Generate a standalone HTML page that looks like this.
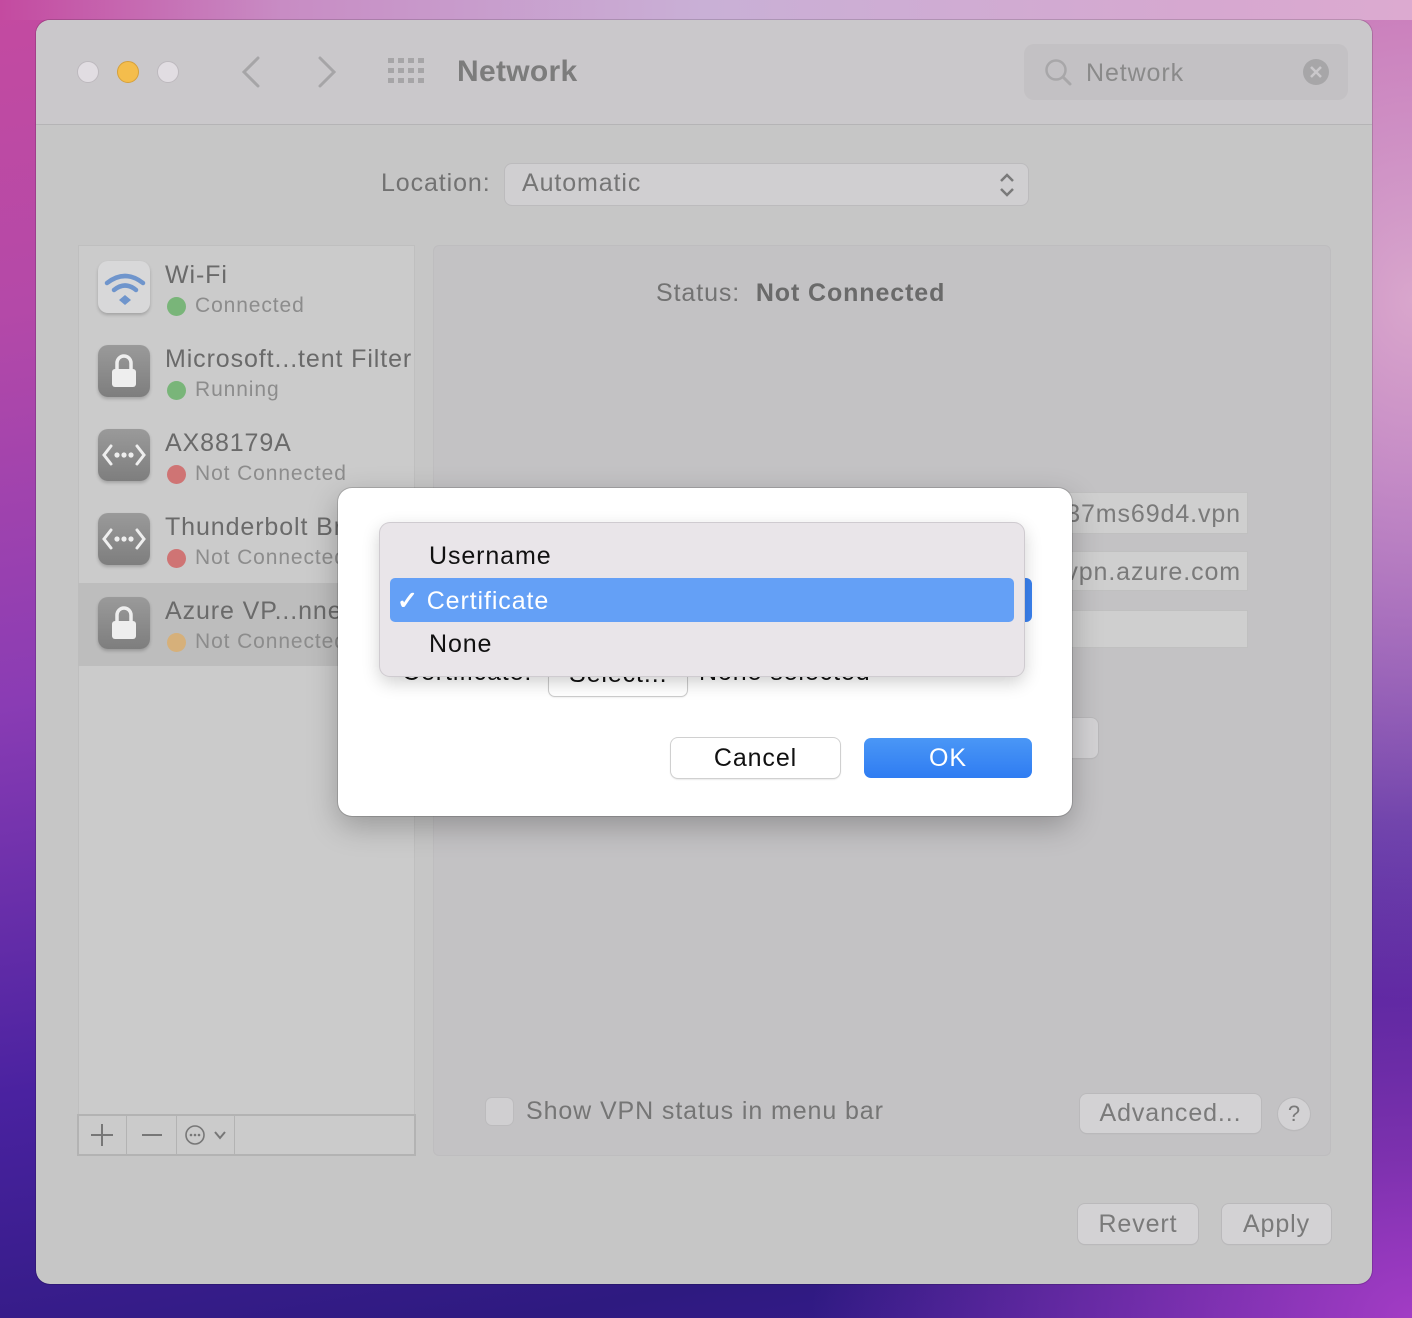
<!DOCTYPE html>
<html><head><meta charset="utf-8"><style>
*{margin:0;padding:0;box-sizing:border-box}
body{width:1412px;height:1318px;overflow:hidden;position:relative;font-family:"Liberation Sans",sans-serif;letter-spacing:0.9px;
background:
radial-gradient(ellipse 500px 700px at 1412px 300px,#d9a6cc 0%,rgba(217,166,204,0) 100%),
radial-gradient(ellipse 600px 500px at 1412px 1318px,#a23cc4 0%,rgba(162,60,196,0) 100%),
linear-gradient(170deg,#c44aa0 0%,#b449a8 20%,#8a3cb4 45%,#4a22a0 70%,#2e1a80 90%,#3a1c90 100%);}
.bgt{position:absolute;left:0;top:0;width:1412px;height:20px;background:linear-gradient(90deg,#c44aa0 0%,#c88cc4 20%,#c9b0d6 50%,#d6a8d0 85%,#dcaad0 100%)}
.win{position:absolute;left:36px;top:20px;width:1336px;height:1264px;border-radius:14px;background:#c6c6c6;overflow:hidden;box-shadow:0 0 0 1px rgba(0,0,0,.15)}
.tb{position:absolute;left:0;top:0;width:100%;height:105px;background:#cac8cb;border-bottom:1px solid #b5b4b6}
.dot{position:absolute;top:41px;width:22px;height:22px;border-radius:50%;background:#e1dde2;border:1px solid #bdb9be}
.abs{position:absolute}
.row .t1{position:absolute;left:87px;font-size:25px;color:#6a6a6a}
.row .t2{position:absolute;left:117px;font-size:21px;color:#8c8c8c}
.sd{position:absolute;left:89px;width:19px;height:19px;border-radius:50%}
.ic{position:absolute;left:20px;width:52px;height:52px;border-radius:10px;background:linear-gradient(#9a9a9a,#7e7e7e);box-shadow:0 2px 3px rgba(0,0,0,.2)}
.btn{position:absolute;background:#d3d2d4;border-radius:7px;box-shadow:0 0 0 1px #bab9bb,0 1px 1px rgba(0,0,0,.1);color:#7a7a7a;font-size:25px;text-align:center}
.fld{position:absolute;background:#cfcfcf;border:1px solid #c0c0c0;font-size:25px;color:#7a7a7a;text-align:right;padding-right:6px;white-space:nowrap;overflow:hidden}
</style></head><body>
<div class="bgt"></div>
<div class="win">
 <div class="tb">
  <div class="dot" style="left:41px"></div>
  <div class="dot" style="left:81px;background:#f4bd4c;border-color:#d6a03a"></div>
  <div class="dot" style="left:121px"></div>
  <svg class="abs" style="left:200px;top:34px" width="120" height="36"><path d="M22 4 L8 18 L22 32" stroke="#a6a5a7" stroke-width="3" fill="none" stroke-linecap="round"/><path d="M84 4 L98 18 L84 32" stroke="#a6a5a7" stroke-width="3" fill="none" stroke-linecap="round"/></svg>
  <svg class="abs" style="left:352px;top:38px" width="38" height="28" fill="#a6a5a7">
   <rect x="0" y="0" width="6" height="5"/><rect x="10" y="0" width="6" height="5"/><rect x="20" y="0" width="6" height="5"/><rect x="30" y="0" width="6" height="5"/>
   <rect x="0" y="10" width="6" height="5"/><rect x="10" y="10" width="6" height="5"/><rect x="20" y="10" width="6" height="5"/><rect x="30" y="10" width="6" height="5"/>
   <rect x="0" y="20" width="6" height="5"/><rect x="10" y="20" width="6" height="5"/><rect x="20" y="20" width="6" height="5"/><rect x="30" y="20" width="6" height="5"/></svg>
  <div class="abs" style="left:421px;top:35px;font-size:30px;font-weight:bold;color:#7c7c7c;letter-spacing:0.3px">Network</div>
  <div class="abs" style="left:988px;top:24px;width:324px;height:56px;border-radius:10px;background:#c3c1c4"></div>
  <svg class="abs" style="left:1008px;top:38px" width="30" height="30"><circle cx="12" cy="12" r="9.5" stroke="#a8a7a9" stroke-width="2.5" fill="none"/><path d="M19 19 L26 26" stroke="#a8a7a9" stroke-width="3" stroke-linecap="round"/></svg>
  <div class="abs" style="left:1050px;top:39px;font-size:25px;color:#8a8a8a">Network</div>
  <svg class="abs" style="left:1266px;top:38px" width="28" height="28"><circle cx="14" cy="14" r="13" fill="#a7a6a8"/><path d="M9 9 L19 19 M19 9 L9 19" stroke="#cac8cb" stroke-width="2.5"/></svg>
 </div>
 <div class="abs" style="left:345px;top:149px;font-size:25px;color:#727272">Location:</div>
 <div class="abs" style="left:469px;top:144px;width:523px;height:41px;border-radius:7px;background:#d0cfd1;box-shadow:0 0 0 1px #bcbbbd"></div>
 <div class="abs" style="left:486px;top:149px;font-size:25px;color:#757575">Automatic</div>
 <svg class="abs" style="left:962px;top:151px" width="18" height="28"><path d="M3 10 L9 4 L15 10 M3 18 L9 24 L15 18" stroke="#7a7a7a" stroke-width="2.5" fill="none"/></svg>

 <div class="abs" style="left:42px;top:225px;width:337px;height:911px;background:#cbcbcb;border:1px solid #bfbfbf"></div>
 <div class="abs" style="left:42px;top:563px;width:337px;height:83px;background:#bdbdbd"></div>
 <div class="abs row" style="left:42px;top:225px;width:337px;height:911px;overflow:hidden">
  <div class="ic" style="top:16px;background:#d8d8d9"></div>
  <svg class="abs" style="left:26px;top:26px" width="42" height="36"><path d="M3 12 Q21 -2 39 12" stroke="#6f95cc" stroke-width="4.5" fill="none" stroke-linecap="round"/><path d="M10 19 Q21 10 32 19" stroke="#6f95cc" stroke-width="4.5" fill="none" stroke-linecap="round"/><path d="M21 24 L27 29 L21 34 L15 29Z" fill="#6f95cc"/></svg>
  <div class="t1" style="top:16px">Wi-Fi</div>
  <div class="sd" style="top:52px;background:#79b579"></div><div class="t2" style="top:49px">Connected</div>

  <div class="ic" style="top:100px"></div>
  <svg class="abs" style="left:32px;top:106px" width="28" height="40"><path d="M7 18 V12 a7 7 0 0 1 14 0 V18" stroke="#eee" stroke-width="3.5" fill="none"/><rect x="2" y="18" width="24" height="18" rx="3" fill="#eee"/></svg>
  <div class="t1" style="top:100px">Microsoft...tent Filter</div>
  <div class="sd" style="top:136px;background:#79b579"></div><div class="t2" style="top:133px">Running</div>

  <div class="ic" style="top:184px"></div>
  <svg class="abs" style="left:20px;top:184px" width="52" height="52"><path d="M13 17 L6 26 L13 35 M39 17 L46 26 L39 35" stroke="#eee" stroke-width="3" fill="none" stroke-linecap="round"/><circle cx="19" cy="26" r="2.6" fill="#eee"/><circle cx="26" cy="26" r="2.6" fill="#eee"/><circle cx="33" cy="26" r="2.6" fill="#eee"/></svg>
  <div class="t1" style="top:184px">AX88179A</div>
  <div class="sd" style="top:220px;background:#cf7474"></div><div class="t2" style="top:217px">Not Connected</div>

  <div class="ic" style="top:268px"></div>
  <svg class="abs" style="left:20px;top:268px" width="52" height="52"><path d="M13 17 L6 26 L13 35 M39 17 L46 26 L39 35" stroke="#eee" stroke-width="3" fill="none" stroke-linecap="round"/><circle cx="19" cy="26" r="2.6" fill="#eee"/><circle cx="26" cy="26" r="2.6" fill="#eee"/><circle cx="33" cy="26" r="2.6" fill="#eee"/></svg>
  <div class="t1" style="top:268px">Thunderbolt Bridge</div>
  <div class="sd" style="top:304px;background:#cf7474"></div><div class="t2" style="top:301px">Not Connected</div>

  <div class="ic" style="top:352px"></div>
  <svg class="abs" style="left:32px;top:358px" width="28" height="40"><path d="M7 18 V12 a7 7 0 0 1 14 0 V18" stroke="#eee" stroke-width="3.5" fill="none"/><rect x="2" y="18" width="24" height="18" rx="3" fill="#eee"/></svg>
  <div class="t1" style="top:352px">Azure VP...nnection</div>
  <div class="sd" style="top:388px;background:#d6b07a"></div><div class="t2" style="top:385px">Not Connected</div>
 </div>
 <div class="abs" style="left:41px;top:1094px;width:339px;height:42px;border:2px solid #b3b3b3;background:#cbcbcb"></div>
 <div class="abs" style="left:90px;top:1096px;width:1px;height:38px;background:#b3b3b3"></div>
 <div class="abs" style="left:140px;top:1096px;width:1px;height:38px;background:#b3b3b3"></div>
 <div class="abs" style="left:198px;top:1096px;width:1px;height:38px;background:#b3b3b3"></div>
 <svg class="abs" style="left:54px;top:1102px" width="140" height="26"><path d="M12 2 V24 M1 13 H23" stroke="#777" stroke-width="2"/><path d="M52 13 H72" stroke="#777" stroke-width="2"/><circle cx="105" cy="13" r="9" stroke="#777" stroke-width="1.6" fill="none"/><circle cx="101" cy="13" r="1.3" fill="#777"/><circle cx="105" cy="13" r="1.3" fill="#777"/><circle cx="109" cy="13" r="1.3" fill="#777"/><path d="M125 10 L130 16 L135 10" stroke="#777" stroke-width="2" fill="none"/></svg>

 <div class="abs" style="left:397px;top:225px;width:898px;height:911px;background:#c3c2c4;border-radius:6px;border:1px solid #bebdbf"></div>
 <div class="abs" style="left:620px;top:259px;font-size:25px;color:#727272">Status:&nbsp; <b style="color:#6a6a6a">Not Connected</b></div>
 <div class="fld" style="left:1010px;top:472px;width:202px;height:42px;line-height:42px">37ms69d4.vpn</div>
 <div class="fld" style="left:1010px;top:531px;width:202px;height:40px;line-height:40px">vpn.azure.com</div>
 <div class="fld" style="left:1010px;top:590px;width:202px;height:38px"></div>
 <div class="btn" style="left:1000px;top:698px;width:62px;height:40px"></div>
 <div class="abs" style="left:450px;top:1078px;width:27px;height:27px;border-radius:6px;background:#d0cfd1;box-shadow:0 0 0 1px #bcbbbd"></div>
 <div class="abs" style="left:490px;top:1077px;font-size:25px;color:#757575">Show VPN status in menu bar</div>
 <div class="btn" style="left:1044px;top:1074px;width:181px;height:39px;line-height:39px">Advanced...</div>
 <div class="btn" style="left:1242px;top:1078px;width:32px;height:32px;border-radius:50%;line-height:32px;font-size:22px;letter-spacing:0">?</div>
 <div class="btn" style="left:1042px;top:1184px;width:120px;height:40px;line-height:40px">Revert</div>
 <div class="btn" style="left:1186px;top:1184px;width:109px;height:40px;line-height:40px">Apply</div>
</div>

<div class="abs" style="left:338px;top:488px;width:734px;height:328px;background:#fff;border-radius:14px;box-shadow:0 0 0 1px rgba(0,0,0,.15),0 10px 30px rgba(0,0,0,.25)"></div>
<div class="abs" style="left:402px;top:658px;font-size:25px;color:#111">Certificate:</div>
<div class="abs" style="left:549px;top:660px;width:138px;height:36px;border-radius:6px;background:#fff;box-shadow:0 0 0 1px #ccc,0 1px 2px rgba(0,0,0,.15);font-size:25px;padding-left:20px;color:#111">Select...</div>
<div class="abs" style="left:699px;top:658px;font-size:25px;color:#111">None selected</div>
<div class="abs" style="left:1010px;top:578px;width:22px;height:44px;border-radius:6px;background:#3b82f0"></div>
<div class="abs" style="left:671px;top:738px;width:169px;height:40px;border-radius:7px;background:#fff;box-shadow:0 0 0 1px #d0d0d0,0 1px 2px rgba(0,0,0,.2);font-size:25px;color:#111;text-align:center;line-height:40px">Cancel</div>
<div class="abs" style="left:864px;top:738px;width:168px;height:40px;border-radius:7px;background:linear-gradient(#4a97f6,#2f7cf2);font-size:25px;color:#fff;text-align:center;line-height:40px">OK</div>
<div class="abs" style="left:380px;top:523px;width:644px;height:153px;border-radius:10px;background:#e9e5e9;box-shadow:0 0 0 1px #cfcbd0,0 6px 18px rgba(0,0,0,.2)"></div>
<div class="abs" style="left:390px;top:578px;width:624px;height:44px;border-radius:5px;background:#64a0f6"></div>
<div class="abs" style="left:429px;top:542px;font-size:25px;color:#111">Username</div>
<div class="abs" style="left:397px;top:586px;font-size:25px;color:#fff"><b>✓</b> Certificate</div>
<div class="abs" style="left:429px;top:630px;font-size:25px;color:#111">None</div>
</body></html>
